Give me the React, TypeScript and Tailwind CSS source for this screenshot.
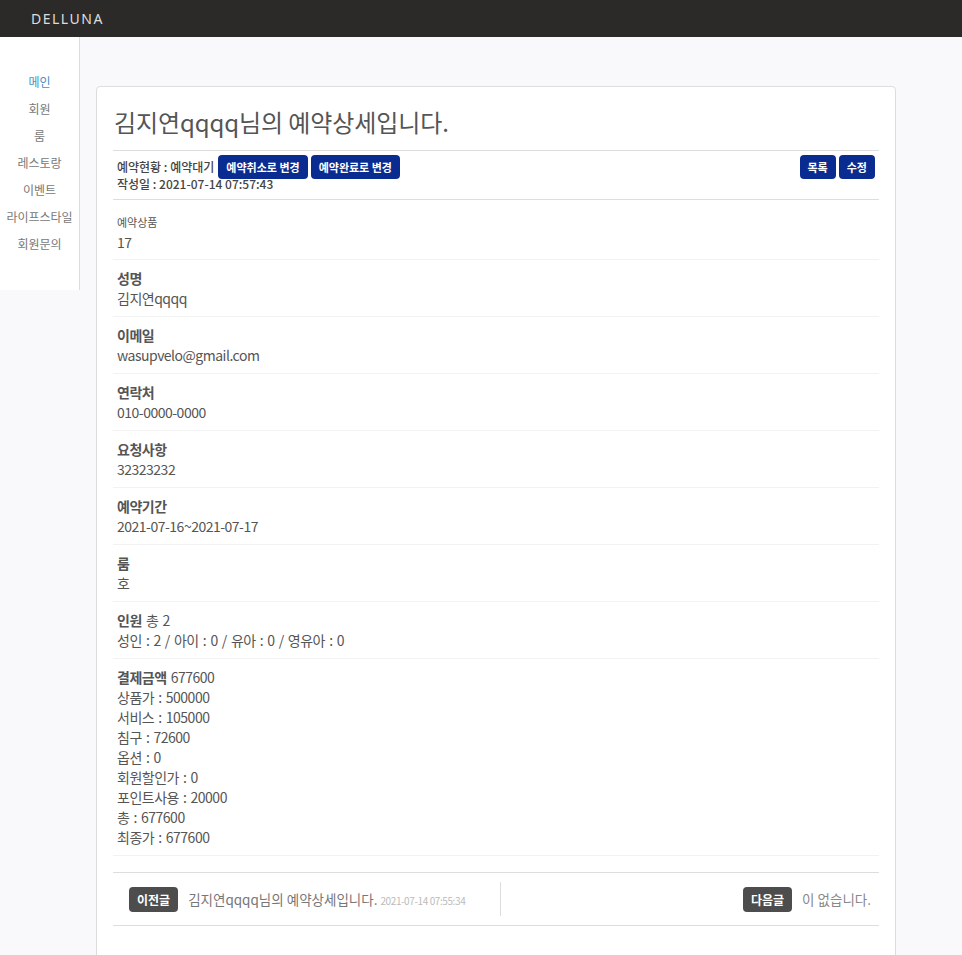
import type { ReactNode } from "react";

const menu = ["메인", "회원", "룸", "레스토랑", "이벤트", "라이프스타일", "회원문의"];

const fields: { label: string; value: ReactNode; small?: boolean }[] = [
  { label: "예약상품", value: "17", small: true },
  { label: "성명", value: "김지연qqqq" },
  { label: "이메일", value: "wasupvelo@gmail.com" },
  { label: "연락처", value: "010-0000-0000" },
  { label: "요청사항", value: "32323232" },
  { label: "예약기간", value: "2021-07-16~2021-07-17" },
  { label: "룸", value: "호" },
];

const payment = [
  "상품가 : 500000",
  "서비스 : 105000",
  "침구 : 72600",
  "옵션 : 0",
  "회원할인가 : 0",
  "포인트사용 : 20000",
  "총 : 677600",
  "최종가 : 677600",
];

function Btn({ children }: { children: ReactNode }) {
  return (
    <button className="h-6 rounded-[4px] bg-[#0a2c91] px-2 text-[11px] font-bold leading-6 text-white">
      {children}
    </button>
  );
}

function Badge({ children }: { children: ReactNode }) {
  return (
    <span className="inline-block h-[25px] rounded-[4px] bg-[#4d4d4d] px-2 text-[12px] font-bold leading-[25px] text-white">
      {children}
    </span>
  );
}

export default function App() {
  return (
    <div
      className="min-h-screen bg-[#f9f9fb] text-[#555]"
      style={{ fontFamily: '"Noto Sans CJK KR", "Noto Sans", sans-serif' }}
    >
      <header className="flex h-[37px] items-center bg-[#2b2a28] pl-[31px]">
        <span
          className="text-[14px] tracking-[1.5px] text-[#ddd]"
          style={{ fontFamily: '"Noto Sans", sans-serif' }}
        >
          DELLUNA
        </span>
      </header>

      <div className="flex">
        <nav className="w-[80px] shrink-0 self-start border-r border-[#ddd] bg-white pb-[33px] pt-[31px]">
          {menu.map((m, i) => (
            <div
              key={m}
              className={`text-center text-[12px] leading-[27px] ${i === 0 ? "text-[#4a8fc4]" : "text-[#777]"}`}
            >
              {m}
            </div>
          ))}
        </nav>

        <main className="flex-1 pl-4 pt-[49px]">
          <section className="w-[800px] rounded-[4px] border border-[#ddd] bg-white px-4 pb-10">
            <h1 className="mb-[13px] mt-5 pl-[1px] text-[24px] leading-[30px] tracking-[-0.1px] text-[#555]">
              김지연qqqq님의 예약상세입니다.
            </h1>

            <div className="border-y border-[#ddd] px-1 pb-[7px] pt-[4px]">
              <div className="flex h-6 items-center justify-between">
                <div className="flex items-center gap-[3px] text-[12px] font-medium text-[#444]">
                  <span className="mr-[1px]">예약현황 : 예약대기</span>
                  <Btn>예약취소로 변경</Btn>
                  <Btn>예약완료로 변경</Btn>
                </div>
                <div className="flex gap-[3px]">
                  <Btn>목록</Btn>
                  <Btn>수정</Btn>
                </div>
              </div>
              <div className="-mt-[3px] text-[12px] font-medium leading-4 text-[#444]">
                작성일 : 2021-07-14 07:57:43
              </div>
            </div>

            <div className="tracking-[-0.5px] [word-spacing:1.5px]">
              {fields.map((f, i) => (
                <div
                  key={f.label}
                  className={`border-b border-[#f2f2f2] px-1 text-[14px] leading-5 ${i === 0 ? "pb-[7px] pt-[14px]" : "pb-[8px] pt-[8px]"}`}
                >
                  <div className={f.small ? "text-[11px] leading-4 tracking-normal text-[#555]" : "font-bold text-[#555]"}>
                    {f.label}
                  </div>
                  <div className={i === 0 ? "mt-[2px]" : ""}>{f.value}</div>
                </div>
              ))}

              <div className="border-b border-[#f2f2f2] px-1 pb-[8px] pt-[8px] text-[14px] leading-5">
                <div>
                  <b>인원</b> 총 2
                </div>
                <div>성인 : 2 / 아이 : 0 / 유아 : 0 / 영유아 : 0</div>
              </div>

              <div className="border-b border-[#f2f2f2] px-1 pb-[8px] pt-[8px] text-[14px] leading-5">
                <div>
                  <b>결제금액</b> 677600
                </div>
                {payment.map((p) => (
                  <div key={p}>{p}</div>
                ))}
              </div>
            </div>

            <div className="mt-4 flex border-y border-[#ddd] py-[9px]">
              <div className="flex h-[34px] flex-1 items-center gap-[10px] border-r border-[#ddd] pl-4">
                <Badge>이전글</Badge>
                <span className="text-[13.5px] text-[#777]">
                  김지연qqqq님의 예약상세입니다.{" "}
                  <span className="text-[10px] tracking-[-0.4px] text-[#bbb]">2021-07-14 07:55:34</span>
                </span>
              </div>
              <div className="flex h-[34px] flex-1 items-center justify-end gap-[10px] pr-2">
                <Badge>다음글</Badge>
                <span className="text-[13.5px] text-[#888]">이 없습니다.</span>
              </div>
            </div>
          </section>
        </main>
      </div>
    </div>
  );
}
